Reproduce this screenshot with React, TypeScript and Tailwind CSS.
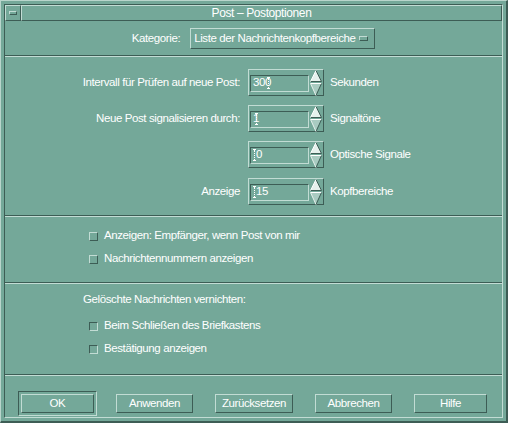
import React from 'react';

const raised = 'border border-t-[#c2dcd4] border-l-[#c2dcd4] border-b-[#3d5d55] border-r-[#3d5d55]';
const sunken = 'border border-t-[#3d5d55] border-l-[#3d5d55] border-b-[#c2dcd4] border-r-[#c2dcd4]';

function Sep() {
  return <div className="h-[2px] shrink-0 border-t border-t-[#3d5d55] border-b border-b-[#c2dcd4]" />;
}

function Cursor({ cls = '' }: { cls?: string }) {
  return (
    <span className={'inline-flex flex-col items-center w-[3px] h-[12px] ' + cls}>
      <span className="block w-[3px] h-[1px] bg-white" />
      <span className="block w-[1px] flex-1 border-l border-dotted border-white" />
      <span className="block w-[3px] h-[1px] bg-white" />
    </span>
  );
}

function Arrows() {
  return (
    <svg width="12" height="26" viewBox="0 0 12 26" className="shrink-0">
      <polygon points="6,0.5 11.5,11.5 0.5,11.5" fill="#e6f1ed" />
      <polyline points="6,0.5 11.5,11.5 0.5,11.5" stroke="#3d5d55" fill="none" strokeWidth="1" />
      <line x1="0.5" y1="11.5" x2="6" y2="0.5" stroke="#ffffff" strokeWidth="1" />
      <polygon points="0.5,13.5 11.5,13.5 6,25.5" fill="#a9cbc1" />
      <line x1="0.5" y1="13.5" x2="11.5" y2="13.5" stroke="#ffffff" strokeWidth="1" />
      <line x1="11.5" y1="13.5" x2="6" y2="25.5" stroke="#3d5d55" strokeWidth="1" />
      <line x1="0.5" y1="13.5" x2="6" y2="25.5" stroke="#e6f1ed" strokeWidth="1" />
    </svg>
  );
}

function SpinRow({ label, value, unit, cursorFirst, mt }: { label: string; value: string; unit: string; cursorFirst?: boolean; mt: string }) {
  return (
    <div className={'flex items-center h-[27px] ' + mt}>
      <div className="w-[235px] text-right">{label}</div>
      <div className={'ml-[8px] w-[76px] h-[27px] flex items-center pl-[1px] pr-[1px] pt-[1px] ' + raised}>
        <div className={'w-[60px] h-[17px] flex items-center pl-[2px] ' + sunken}>
          {cursorFirst ? (
            <>
              <Cursor cls="mr-[0px]" />
              <span>{value}</span>
            </>
          ) : (
            <>
              <span>{value}</span>
              <Cursor cls="-ml-[4px]" />
            </>
          )}
        </div>
        <div className="ml-[1px]">
          <Arrows />
        </div>
      </div>
      <div className="ml-[6px]">{unit}</div>
    </div>
  );
}

function Check({ label, mt, sunk }: { label: string; mt: string; sunk?: boolean }) {
  return (
    <div className={'flex items-center h-[16px] ' + mt}>
      <div className={'ml-[84px] w-[9px] h-[9px] ' + (sunk ? sunken : raised)} />
      <div className="ml-[6px]">{label}</div>
    </div>
  );
}

function Btn({ label, w }: { label: string; w: string }) {
  return <div className={'h-[19px] flex items-center justify-center ' + w + ' ' + raised}>{label}</div>;
}

export default function App() {
  return (
    <div className="w-[508px] h-[423px] bg-[#74a899] text-white text-[11.5px] tracking-[-0.4px] leading-none font-['Liberation_Sans',Arial,sans-serif] border-t border-l border-t-[#b9d5cc] border-l-[#b9d5cc] border-b-2 border-r-2 border-b-[#3d5d55] border-r-[#3d5d55] pt-[3px] pl-[3px] pr-[3px] pb-[3px]">
      <div className="w-full h-full flex flex-col border border-t-[#3d5d55] border-l-[#3d5d55] border-b-[#c2dcd4] border-r-[#c2dcd4]">
        {/* title bar */}
        <div className="flex h-[16px] shrink-0">
          <div className={'w-[16px] h-[16px] flex items-center justify-center ' + raised}>
            <div className={'w-[8px] h-[4px] ' + raised} />
          </div>
          <div className={'flex-1 h-[16px] flex items-center justify-center text-[12px] ' + raised}>Post – Postoptionen</div>
        </div>

        {/* Kategorie */}
        <div className="h-[34px] shrink-0 flex items-center justify-center gap-[10px] pt-[1px]">
          <div>Kategorie:</div>
          <div className={'w-[185px] h-[21px] flex items-center pl-[3px] pr-[6px] justify-between ' + raised}>
            <span>Liste der Nachrichtenkopfbereiche</span>
            <div className={'w-[9px] h-[5px] ' + raised} />
          </div>
        </div>
        <Sep />

        {/* spin section */}
        <div className="h-[158px] shrink-0 flex flex-col pt-[12px]">
          <SpinRow mt="" label="Intervall für Prüfen auf neue Post:" value="300" unit="Sekunden" />
          <SpinRow mt="mt-[9px]" label="Neue Post signalisieren durch:" value="1" unit="Signaltöne" />
          <SpinRow mt="mt-[9px]" label="" value="0" unit="Optische Signale" cursorFirst />
          <SpinRow mt="mt-[10px]" label="Anzeige" value="15" unit="Kopfbereiche" cursorFirst />
        </div>
        <Sep />

        {/* checkboxes */}
        <div className="h-[65px] shrink-0 flex flex-col pt-[11px]">
          <Check mt="" label="Anzeigen: Empfänger, wenn Post von mir" />
          <Check mt="mt-[7px]" label="Nachrichtennummern anzeigen" />
        </div>
        <Sep />

        {/* delete */}
        <div className="h-[90px] shrink-0 flex flex-col pt-[8px]">
          <div className="h-[16px] flex items-center pl-[78px]">Gelöschte Nachrichten vernichten:</div>
          <Check mt="mt-[10px]" label="Beim Schließen des Briefkastens" sunk />
          <Check mt="mt-[7px]" label="Bestätigung anzeigen" sunk />
        </div>
        <Sep />

        {/* buttons */}
        <div className="flex-1 flex items-start pt-[18px] pl-[16px] gap-[22px]">
          <div className={'-m-[3px] p-[2px] ' + sunken}>
            <Btn label="OK" w="w-[73px]" />
          </div>
          <Btn label="Anwenden" w="w-[77px]" />
          <Btn label="Zurücksetzen" w="w-[78px]" />
          <Btn label="Abbrechen" w="w-[77px]" />
          <Btn label="Hilfe" w="w-[73px]" />
        </div>
      </div>
    </div>
  );
}
